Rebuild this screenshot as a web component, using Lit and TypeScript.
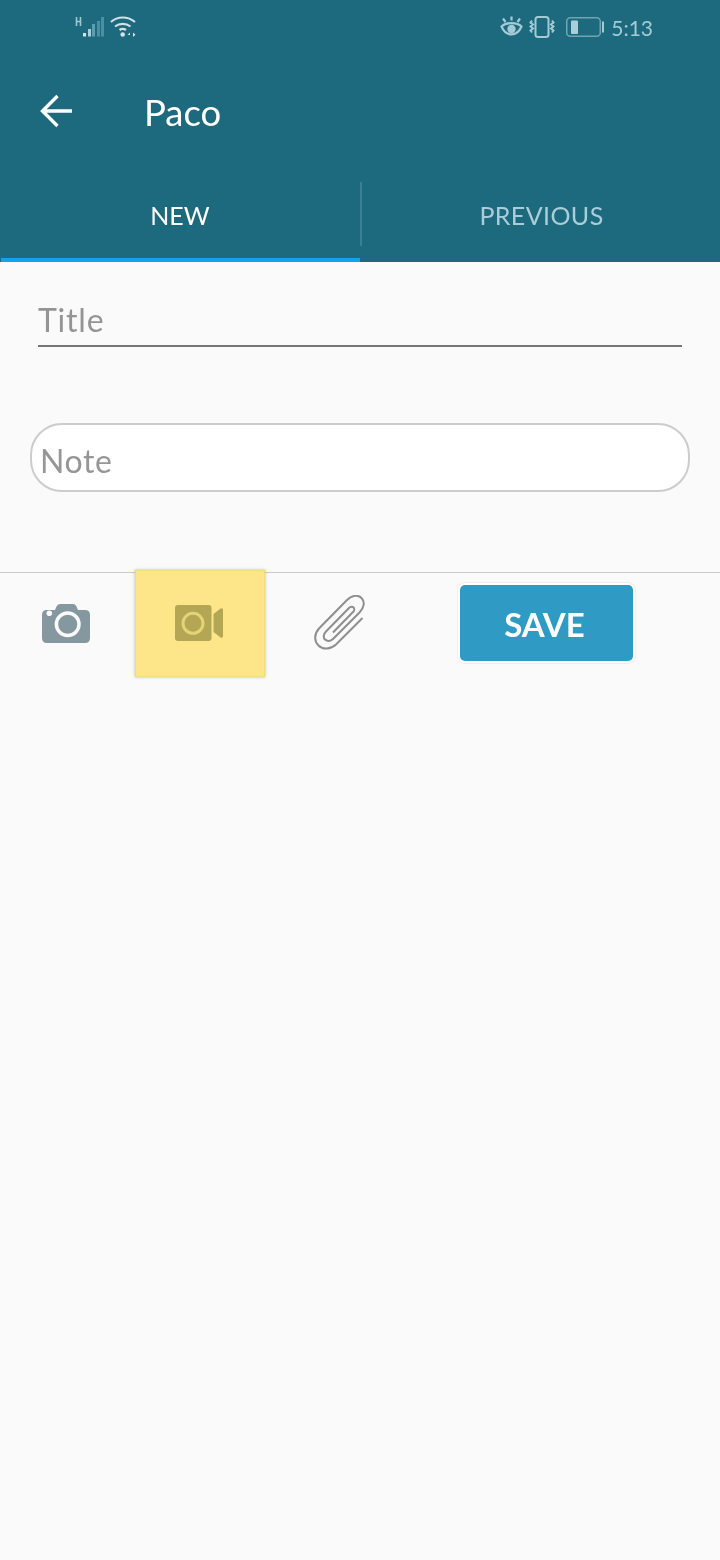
import { LitElement, html, css } from "lit";
import { customElement } from "lit/decorators.js";

@customElement("app-root")
export class AppRoot extends LitElement {
  static styles = css`
    :host { display: block; width: 720px; height: 1560px; background: #fafafa; font-family: Lato, "Open Sans", sans-serif; overflow: hidden; }
    .head { background: #1d697d; height: 262px; display: flex; flex-direction: column; }
    .status { height: 56px; display: flex; align-items: center; justify-content: space-between; padding: 0 67px 0 75px; box-sizing: border-box; }
    .status-l, .status-r { display: flex; align-items: center; }
    .status-l { gap: 5px; }
    .status-l svg, .status-r svg { display: block; }
    .status-r { color: #a3cbd5; font-size: 21px; margin-bottom: 2px; }
    .eye { margin-right: 5px; }
    .vib { margin-right: 11px; }
    .bat { margin-right: 7px; }
    .time { letter-spacing: 0; will-change: opacity; }
    .bar { height: 126px; display: flex; align-items: center; padding: 0 0 14px 38px; box-sizing: border-box; }
    .bar h1 { margin: 0 0 0 70px; color: #fff; font-size: 36.5px; font-weight: 400; line-height: 44px; will-change: opacity; }
    .back { display: block; margin-bottom: 2px; }
    .tabs { height: 80px; display: flex; }
    .tab { flex: 1 1 0; position: relative; display: flex; justify-content: center; padding-top: 17px; box-sizing: border-box; font-size: 25px; line-height: 32px; color: #a8cfd9; }
    .tab span { will-change: opacity; }
    .tab.on { color: #fff; }
    .tab.on::after { content: ""; position: absolute; left: 1px; right: 0; bottom: 0; height: 4px; background: #0ea5ea; }
    .tab + .tab { letter-spacing: .4px; }
    .tab + .tab span { margin-left: 3px; }
    .tab + .tab::before { content: ""; position: absolute; left: 0; top: 0; width: 2px; height: 64px; background: #3a7f92; }
    .form { padding: 36px 38px 0; }
    .title { height: 47px; border-bottom: 2px solid #757575; color: #949494; font-size: 32px; line-height: 44px; letter-spacing: .8px; will-change: opacity; }
    .note { margin: 76px -8px 0; height: 69px; box-sizing: border-box; border: 2px solid #cccccc; border-radius: 32px; background: #fff; color: #969696; font-size: 32px; padding-left: 8px; letter-spacing: .6px; }
    .note span { display: block; line-height: 70px; margin-top: 1px; will-change: opacity; }
    .tools { margin-top: 80px; border-top: 1px solid #cacaca; height: 105px; display: flex; }
    .cam { width: 135px; display: flex; justify-content: center; padding-top: 31px; box-sizing: border-box; }
    .cam svg { margin-left: -3px; filter: blur(.4px); }
    .vid { width: 130px; height: 107px; margin-top: -3px; background: #fde68a; box-shadow: 0 0 3px rgba(120,120,120,.5), inset 0 0 2px rgba(160,130,30,.35); flex: none; display: flex; justify-content: center; align-items: center; }
    .vid svg { margin: 0 2px 1px 0; filter: blur(.4px); }
    .clip { width: 150px; display: flex; justify-content: center; padding-top: 22px; box-sizing: border-box; }
    .save { margin: 12px 0 0 45px; width: 173px; height: 76px; background: #2f9ac4; border-radius: 5px; box-shadow: 0 0 0 2px #fff, 0 0 0 3px rgba(0,0,0,.05); color: #fff; font-size: 33px; font-weight: 700; display: flex; align-items: center; justify-content: center; border: 0; padding: 1px 4px 0 0; box-sizing: border-box; font-family: inherit; }
    .save span { will-change: opacity; }
  `;

  render() {
    return html`
      <div class="head">
        <div class="status">
          <div class="status-l">
            <svg width="29" height="24" viewBox="0 0 29 24">
              <path d="M1.500 1v9M5.500 1v9M1.500 5.500h4" stroke="#9fc8d3" stroke-width="1.600" fill="none"/>
              <rect x="8" y="17" width="3" height="3.500" fill="#cfe4ea"/>
              <rect x="13" y="13" width="3" height="7.500" fill="#a9cfd9"/>
              <rect x="17" y="8" width="3" height="12.500" fill="#5f9cad"/>
              <rect x="22" y="5" width="3" height="15.500" fill="#4d8fa2"/>
              <rect x="26" y="1" width="3" height="19.500" fill="#4d8fa2"/>
            </svg>
            <svg width="28" height="24" viewBox="0 0 28 24" fill="none" stroke="#cfe3e8" stroke-width="2.200">
              <path d="M2 6C8.500 0 19 0 26 6"/>
              <path d="M6 10.500c4.500-3.600 11-3.600 15.500 0"/>
              <path d="M10.500 14c2-1.500 4.500-1.500 6.500 0"/>
              <circle cx="13.700" cy="18.500" r="2.300" fill="#cfe3e8" stroke="none"/>
              <path d="M21 16.500l-2.500 2.500h2.500zM24 16.500v4.500l2.500-2.200z" fill="#cfe3e8" stroke="none"/>
            </svg>
          </div>
          <div class="status-r">
            <svg class="eye" width="24" height="22" viewBox="0 0 24 22" fill="none" stroke="#a3cbd5" stroke-width="2.200">
              <path d="M1.500 10.500C6 21 17 21 21.500 10.500 17 6 6 6 1.500 10.500z"/>
              <circle cx="11.500" cy="13" r="4.200" fill="#a3cbd5" stroke="none"/>
              <path d="M3 2.500l2.500 3.500M11.500 .5v4M20 2.500l-2.500 3.500"/>
            </svg>
            <svg class="vib" width="26" height="22" viewBox="0 0 26 22" fill="none" stroke="#a3cbd5" stroke-width="2">
              <rect x="6.500" y="1" width="13" height="20" rx="2.500"/>
              <path d="M3 4.500l-1.500 2 2.500 2-2.500 2 2.500 2-2.500 2 1.500 2M23 4.500l1.500 2-2.500 2 2.500 2-2.500 2 2.500 2-1.500 2"/>
            </svg>
            <svg class="bat" width="38" height="20" viewBox="0 0 38 20">
              <rect x=".75" y=".75" width="33.500" height="18.500" rx="3.500" fill="none" stroke="#6fa5b4" stroke-width="1.500"/>
              <rect x="5" y="3.500" width="7" height="13.500" rx="1" fill="#a9d0da"/>
              <rect x="36" y="4.500" width="2" height="11" fill="#a3cbd5"/>
            </svg>
            <span class="time">5:13</span>
          </div>
        </div>
        <div class="bar">
          <svg class="back" width="36" height="34" viewBox="0 0 36 34" fill="none" stroke="#fff" stroke-width="3.400">
            <path d="M34 17H5M19.500 2L4.500 17 19.500 32"/>
          </svg>
          <h1>Paco</h1>
        </div>
        <div class="tabs">
          <div class="tab on"><span>NEW</span></div>
          <div class="tab"><span>PREVIOUS</span></div>
        </div>
      </div>
      <div class="form">
        <div class="title">Title</div>
        <div class="note"><span>Note</span></div>
      </div>
      <div class="tools">
        <div class="cam">
          <svg width="48" height="40" viewBox="0 0 48 40">
            <path d="M5 6h8l1.500-3.500Q15.500 0 18 0h13q2.500 0 3.500 2.500L36 6h7q5 0 5 5v23q0 5-5 5H5q-5 0-5-5V11q0-5 5-5z" fill="#85979f"/>
            <circle cx="25.700" cy="20.300" r="11.300" fill="none" stroke="#fafafa" stroke-width="3.500"/>
            <circle cx="7.300" cy="9.300" r="2.800" fill="#fafafa"/>
          </svg>
        </div>
        <div class="vid">
          <svg width="48" height="36" viewBox="0 0 48 36">
            <rect x="0" y="0" width="36.500" height="36" rx="3" fill="#b3a654"/>
            <circle cx="18" cy="18.300" r="10" fill="none" stroke="#e3d478" stroke-width="3"/>
            <path d="M38.500 9l7-5.500q2.500-1 2.500 1.500v26q0 2.500-2.500 1.500l-7-5.500z" fill="#b3a654"/>
          </svg>
        </div>
        <div class="clip">
          <svg width="52" height="56" viewBox="0 0 52 56" fill="none" stroke="#8e8e8e" stroke-width="2">
            <path d="M48.500 23L22 49.500c-5.500 5-13 5.500-17.500 1s-4.500-11.500 .5-17L33 5c5-5 11-5.500 14.500-2s3 9.500-2 14.500L19 44c-2.500 2.500-6 2.500-8 .5s-1.500-5.500 1-8L35 13c1.500-1.500 3.500-1.500 4.500-.5s1 3-.5 4.500L19 37.500"/>
          </svg>
        </div>
        <button class="save"><span>SAVE</span></button>
      </div>
    `;
  }
}
